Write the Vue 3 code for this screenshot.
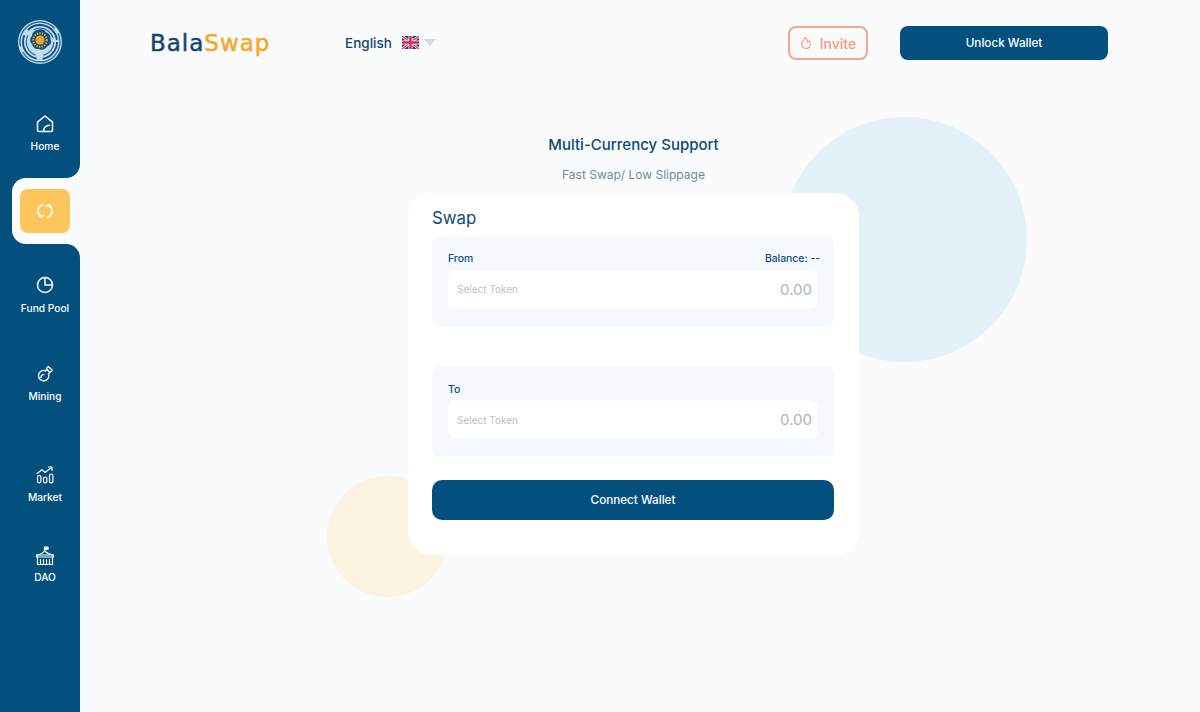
<script setup>
const navTop = { label: 'Home', icon: 'home' }
const navBottom = [
  { label: 'Fund Pool', icon: 'pie', cls: 'fund' },
  { label: 'Mining', icon: 'mining', cls: 'mining' },
  { label: 'Market', icon: 'market', cls: 'market' },
  { label: 'DAO', icon: 'dao', cls: 'dao' },
]
</script>

<template>
  <div class="page">
    <aside class="sidebar">
      <div class="side-top">
        <svg class="logo" width="44" height="44" viewBox="0 0 44 44" fill="none">
          <circle cx="22" cy="22" r="22" fill="#c4dbec" />
          <circle cx="22" cy="22" r="20" stroke="#2c6c9a" stroke-width="1.400" stroke-dasharray="52 6" />
          <circle cx="22" cy="22" r="17" stroke="#0a4f7e" stroke-width="1.800" stroke-dasharray="38 6 30 6" stroke-dashoffset="14" />
          <circle cx="22" cy="22" r="13.800" stroke="#2c6c9a" stroke-width="1.200" stroke-dasharray="24 8" stroke-dashoffset="6" />
          <path d="M21 9.500c3.500-1 6 1 7 3 3 .5 5 3.500 4.500 6.500 1.500 3 0 6.500-3.500 7.500-1.500 3-5 4-8 2.500-3.500.5-6.500-2-7-5-2.500-2-2.500-6 0-8 0-3.500 3.500-6.500 7-6.500Z" fill="#12507f" />
          <circle cx="22" cy="20" r="4.500" fill="#eda727" />
          <circle cx="22" cy="20" r="6.800" stroke="#eda727" stroke-width="2.200" stroke-dasharray="1.300 1.300" />
        </svg>
        <div class="nav-item home">
          <svg width="20" height="20" viewBox="0 0 20 20" fill="none" stroke="#fff" stroke-width="1.500" stroke-linejoin="round" stroke-linecap="round">
            <path d="M2.500 8.200 10 2l7.500 6.200V16a1.600 1.600 0 0 1-1.600 1.600H4.100A1.600 1.600 0 0 1 2.500 16Z" />
            <path d="M8.500 17.500c0-3.600 2.400-6.200 6-6.300" />
          </svg>
          <span>{{ navTop.label }}</span>
        </div>
      </div>

      <div class="side-mid">
        <div class="tab">
          <div class="swap-btn">
            <svg width="20" height="20" viewBox="0 0 20 20" fill="none" stroke="#fff" stroke-width="1.600" stroke-linecap="round" stroke-linejoin="round">
              <path d="M7.500 3.500A7 7 0 0 0 6 15.800" />
              <path d="M4.500 13.500 6 15.800l2.400-1" />
              <path d="M12.500 16.500A7 7 0 0 0 14 4.200" />
              <path d="M15.500 6.500 14 4.200l-2.400 1" />
            </svg>
          </div>
        </div>
      </div>

      <div class="side-bottom">
        <div v-for="item in navBottom" :key="item.label" class="nav-item" :class="item.cls">
          <svg v-if="item.icon === 'pie'" width="20" height="20" viewBox="0 0 20 20" fill="none" stroke="#fff" stroke-width="1.500" stroke-linejoin="round" stroke-linecap="round">
            <circle cx="10" cy="10" r="7.500" />
            <path d="M10 2.500V10h7.500" />
          </svg>
          <svg v-else-if="item.icon === 'mining'" width="20" height="20" viewBox="0 0 20 20" fill="none" stroke="#fff" stroke-width="1.300" stroke-linejoin="round" stroke-linecap="round">
            <path d="M10.500 6.800a5.200 5.200 0 1 0 3 3" />
            <path d="M10.500 6.800 12 5.500l2.800 2.800-1.300 1.500" />
            <path d="m11.500 4.500 1.800-2 4 3.800-2 1.900" />
            <path d="M6 13.500c0-1.500 1-3 2.800-3.200" />
          </svg>
          <svg v-else-if="item.icon === 'market'" width="20" height="20" viewBox="0 0 20 20" fill="none" stroke="#fff" stroke-width="1.200" stroke-linejoin="round" stroke-linecap="round">
            <rect x="2.500" y="10.500" width="3.400" height="7.500" rx="1.700" />
            <rect x="8.500" y="12" width="3.400" height="6" rx="1.700" />
            <rect x="14.500" y="9" width="3.400" height="9" rx="1.700" />
            <path d="M2 8.500 7 4.800l3 2.600 6.500-5" />
            <path d="M13.500 2h3.500v3.300" />
          </svg>
          <svg v-else width="20" height="20" viewBox="0 0 20 20" fill="none" stroke="#fff" stroke-width="1.200" stroke-linejoin="round" stroke-linecap="round">
            <path d="M9.500 5V1h3.500v2.300H9.500" fill="#fff" />
            <path d="M2 9c3-.5 6-2 7.500-4 2 2 5.500 3.500 8.500 4" />
            <path d="M1.500 9h17v2h-17Z" />
            <path d="M2.500 11v7.500h15V11" />
            <path d="M5.500 18v-4.500M8.500 18v-4.500M11.500 18v-4.500M14.500 18v-4.500" />
          </svg>
          <span>{{ item.label }}</span>
        </div>
      </div>
    </aside>

    <main class="main">
      <header class="topbar">
        <div class="brand"><span class="brand-a">Bala</span><span class="brand-b">Swap</span></div>
        <div class="lang">
          <span>English</span>
          <svg class="flag" width="17" height="13" viewBox="0 0 17 13">
            <rect width="17" height="13" rx="2.500" fill="#26307f" />
            <path d="M0 0 17 13M17 0 0 13" stroke="#fff" stroke-width="2.600" />
            <path d="M0 0 17 13M17 0 0 13" stroke="#d8234a" stroke-width="1.200" />
            <path d="M8.500 0v13M0 6.500h17" stroke="#fff" stroke-width="4" />
            <path d="M8.500 0v13M0 6.500h17" stroke="#d8234a" stroke-width="2.400" />
          </svg>
          <i class="caret"></i>
        </div>
        <div class="spacer"></div>
        <button class="invite">
          <svg width="12" height="14" viewBox="0 0 12 14" fill="none" stroke="#f39b7e" stroke-width="1.100" stroke-linejoin="round">
            <path d="M4.800 1.500c.2 2-2.200 3.500-3 5.300C.8 9.500 2.800 12.500 6 12.500s5-2.700 4.200-5.300c-.3-1-1-1.900-1.500-2.300-.2.800-.6 1.200-1.200 1.400C7.700 4.500 6.500 2.500 4.800 1.500Z" />
          </svg>
          <span>Invite</span>
        </button>
        <button class="unlock">Unlock Wallet</button>
      </header>

      <section class="content">
        <div class="stage">
          <i class="blob blue"></i>
          <i class="blob cream"></i>
          <h1>Multi-Currency Support</h1>
          <p class="sub">Fast Swap/ Low Slippage</p>
          <div class="card">
            <h2>Swap</h2>
            <div class="panel">
              <div class="panel-head"><span>From</span><span>Balance: --</span></div>
              <div class="field first"><span class="token">Select Token</span><span class="amount">0.00</span></div>
            </div>
            <div class="panel second">
              <div class="panel-head"><span>To</span></div>
              <div class="field"><span class="token">Select Token</span><span class="amount">0.00</span></div>
            </div>
            <button class="connect">Connect Wallet</button>
          </div>
        </div>
      </section>
    </main>
  </div>
</template>

<style>
html, body { margin: 0; background: #f9fbfd; }
</style>

<style scoped>
.page {
  display: flex;
  width: 1200px;
  height: 712px;
  overflow: hidden;
  background: #f9fbfd;
  font-family: Inter, "Liberation Sans", sans-serif;
  color: #0d4a75;
}
.sidebar {
  display: flex;
  flex-direction: column;
  width: 80px;
  flex: none;
}
.side-top {
  display: flex;
  flex-direction: column;
  align-items: center;
  height: 178px;
  padding-top: 20px;
  box-sizing: border-box;
  background: #03507f;
  border-bottom-right-radius: 14px;
}
.logo { flex: none; }
.nav-item {
  display: flex;
  flex-direction: column;
  align-items: center;
  color: #fff;
  font-size: 10.200px;
  line-height: 14px;
  font-weight: 500;
}
.nav-item svg { display: block; }
.home { margin: 50px 0 0 10px; gap: 5px; }
.side-mid {
  height: 66px;
  padding-left: 12px;
  background: linear-gradient(90deg, #03507f 30px, #f9fbfd 30px);
}
.tab {
  display: flex;
  align-items: center;
  height: 100%;
  padding-left: 8px;
  background: #f9fbfd;
  border-radius: 14px 0 0 14px;
}
.swap-btn {
  display: flex;
  align-items: center;
  justify-content: center;
  width: 50px;
  height: 44px;
  background: #fdc65c;
  border-radius: 8px;
}
.side-bottom {
  flex: 1;
  display: flex;
  flex-direction: column;
  align-items: center;
  padding-left: 10px;
  background: #03507f;
  border-top-right-radius: 14px;
}
.fund { margin-top: 31px; gap: 6px; }
.mining { margin-top: 49px; gap: 5px; }
.market { margin-top: 62px; gap: 5px; }
.dao { margin-top: 42px; gap: 4px; }

.main {
  flex: 1;
  display: flex;
  flex-direction: column;
  min-width: 0;
}
.topbar {
  display: flex;
  align-items: center;
  height: 34px;
  padding: 26px 92px 0 70px;
}
.brand {
  width: 195px;
  font-family: "DejaVu Sans", sans-serif;
  font-size: 23px;
  letter-spacing: 1px;
  -webkit-text-stroke: 0.5px currentColor;
}
.brand-a { color: #14466e; }
.brand-b { color: #f7a823; }
.lang {
  display: flex;
  align-items: center;
  margin-bottom: 1px;
  font-size: 13.500px;
  font-weight: 500;
  color: #14466e;
}
.flag { margin-left: 10px; }
.caret {
  margin-left: 5px;
  width: 0;
  height: 0;
  border-left: 6px solid transparent;
  border-right: 6px solid transparent;
  border-top: 7px solid #d5dbe1;
}
.spacer { flex: 1; }
button {
  font-family: inherit;
  cursor: pointer;
  box-sizing: border-box;
}
.invite {
  display: flex;
  align-items: center;
  justify-content: center;
  gap: 8px;
  width: 80px;
  height: 34px;
  padding: 0;
  background: transparent;
  border: 2px solid #f7a488;
  border-radius: 8px;
  color: #f39b7e;
  font-size: 14px;
  font-weight: 500;
}
.unlock {
  width: 208px;
  height: 34px;
  margin-left: 32px;
  background: #03507f;
  border: 0;
  border-radius: 8px;
  color: #fff;
  font-size: 11.700px;
  font-weight: 500;
}
.content {
  flex: 1;
  display: flex;
  justify-content: center;
  padding-right: 13px;
}
.stage {
  position: relative;
  display: flex;
  flex-direction: column;
  align-items: center;
  width: 451px;
  padding-top: 76px;
}
.blob {
  position: absolute;
  border-radius: 50%;
}
.blob.blue {
  left: 374px;
  top: 57px;
  width: 245px;
  height: 245px;
  background: #e5f1f9;
}
.blob.cream {
  left: -81px;
  top: 416px;
  width: 121px;
  height: 121px;
  background: #fdf3e3;
}
h1 {
  position: relative;
  margin: 0;
  font-size: 15px;
  line-height: 18px;
  font-weight: 500;
  color: #0d4a75;
}
.sub {
  position: relative;
  margin: 13px 0 0;
  font-size: 12px;
  line-height: 15px;
  color: #6f8ba1;
}
.card {
  position: relative;
  width: 100%;
  height: 362px;
  margin-top: 11px;
  padding: 14px 25px 0 24px;
  box-sizing: border-box;
  background: #fff;
  border-radius: 24px;
}
h2 {
  margin: 0 0 7px;
  font-size: 16.800px;
  line-height: 22px;
  font-weight: 400;
  color: #0d4a75;
}
.panel {
  height: 90px;
  padding: 16px 16px 0;
  box-sizing: border-box;
  background: #f5f9fe;
  border-radius: 8px;
}
.panel.second {
  height: 91px;
  margin-top: 40px;
  padding-top: 17px;
}
.panel.second .field { margin-top: 5px; }
.panel-head {
  display: flex;
  justify-content: space-between;
  margin-right: -2px;
  font-size: 10.400px;
  line-height: 13px;
  font-weight: 500;
  color: #0a5080;
}
.field {
  display: flex;
  align-items: center;
  justify-content: space-between;
  height: 37px;
  margin: 6px 0 0;
  padding: 0 6px 0 9px;
  background: #fff;
  border-radius: 8px;
}
.field.first {
  height: 38px;
  margin-top: 5px;
}
.token {
  font-size: 10px;
  color: #b8bfc8;
}
.amount {
  font-size: 15px;
  color: #a9b6c4;
}
.connect {
  display: block;
  width: 100%;
  height: 40px;
  margin-top: 23px;
  background: #03507f;
  border: 0;
  border-radius: 10px;
  color: #fff;
  font-size: 11.700px;
  font-weight: 500;
}
</style>
